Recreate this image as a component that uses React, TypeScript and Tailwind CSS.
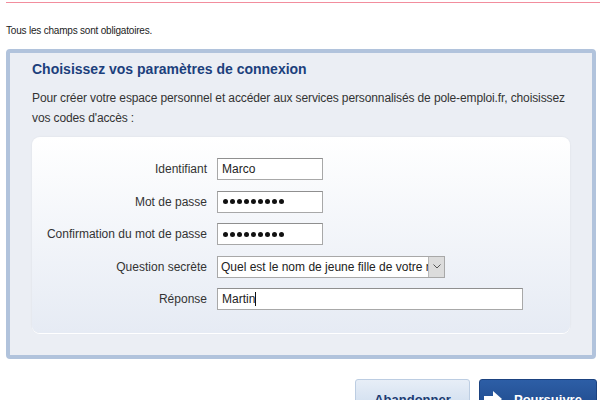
import React from "react";

const Dots = () => (
  <div className="flex items-center gap-[2px]">
    {Array.from({ length: 9 }).map((_, i) => (
      <span key={i} className="block w-[5px] h-[5px] rounded-full bg-[#111]" />
    ))}
  </div>
);

const Row = ({ label, children }: { label: string; children: React.ReactNode }) => (
  <div className="flex items-center h-[22px]">
    <div className="w-[185px] pr-[10px] text-right text-[12px] text-[#333] whitespace-nowrap">{label}</div>
    {children}
  </div>
);

export default function App() {
  return (
    <div className="w-[600px] h-[400px] overflow-hidden bg-white font-['Liberation_Sans',Arial,sans-serif] text-[#333]">
      <div className="ml-[6px] mt-[2px] h-px bg-[#f28d9d]" />
      <p className="ml-[6px] mt-[21px] text-[10px] leading-[14px] text-[#222] tracking-[-0.2px]">Tous les champs sont obligatoires.</p>
      <div className="ml-[6px] mt-[11px] w-[590px] h-[310px] rounded-[4px] border-4 border-[#b1c3dc] bg-[#ebeef4] pl-[22px] pr-[22px]">
        <h1 className="mt-[7px] text-[14px] leading-[18px] font-bold text-[#1c3f7c]">
          Choisissez vos paramètres de connexion
        </h1>
        <p className="mt-[10px] text-[12px] leading-[20px] text-[#333] whitespace-nowrap tracking-[-0.12px]">
          Pour créer votre espace personnel et accéder aux services personnalisés de pole-emploi.fr, choisissez
          <br />
          vos codes d'accès :
        </p>
        <div className="mt-[9px] w-[538px] h-[196px] rounded-[8px] bg-gradient-to-b from-white to-[#e6ebf4] shadow-[0_1px_0_#fff,0_0_2px_rgba(0,0,0,0.08)] pt-[21px] flex flex-col gap-[10.5px]">
          <Row label="Identifiant">
            <div className="w-[106px] h-[22px] border border-[#a8a8a8] border-t-[#8f8f8f] bg-white px-[4px] flex items-center text-[12px] text-[#222]">Marco</div>
          </Row>
          <Row label="Mot de passe">
            <div className="w-[106px] h-[22px] border border-[#a8a8a8] border-t-[#8f8f8f] bg-white px-[5px] flex items-center"><Dots /></div>
          </Row>
          <Row label="Confirmation du mot de passe">
            <div className="w-[106px] h-[22px] border border-[#a8a8a8] border-t-[#8f8f8f] bg-white px-[5px] flex items-center"><Dots /></div>
          </Row>
          <Row label="Question secrète">
            <div className="w-[228px] h-[22px] border border-[#a8a8a8] bg-white flex items-stretch text-[12px] text-[#222]">
              <div className="flex-1 overflow-hidden whitespace-nowrap pl-[3px] flex items-center">Quel est le nom de jeune fille de votre m</div>
              <div className="w-[16px] bg-[#dcdcdc] border-l border-[#b8b8b8] flex items-center justify-center">
                <svg width="8" height="5" viewBox="0 0 8 5"><path d="M0.5 0.5 L4 4 L7.5 0.5" fill="none" stroke="#555" strokeWidth="1" /></svg>
              </div>
            </div>
          </Row>
          <Row label="Réponse">
            <div className="w-[306px] h-[22px] border border-[#a8a8a8] border-t-[#8f8f8f] bg-white px-[4px] flex items-center text-[12px] text-[#222]">
              Martin<span className="inline-block w-px h-[14px] bg-[#111]" />
            </div>
          </Row>
        </div>
      </div>
      <div className="mt-[20px] flex justify-end gap-[9px] pr-[3px]">
        <div className="w-[115px] h-[40px] rounded-[3px] border border-[#bccde2] bg-gradient-to-b from-[#e7eef7] to-[#c8d8ec] flex items-start justify-center pt-[10px] text-[13px] font-bold text-[#1d3c72]">
          Abandonner
        </div>
        <div className="w-[118px] h-[40px] rounded-[3px] bg-gradient-to-b from-[#2d5ea6] to-[#1c4787] border border-[#1b4280] flex items-start pt-[10px] pl-[4px] gap-[12px] text-[13px] font-bold text-white">
          <svg width="18" height="16" viewBox="0 0 18 16" className="mt-[1px]"><path d="M0 5 H9 V0 L18 8 L9 16 V11 H0 Z" fill="#fff" /></svg>
          Poursuivre
        </div>
      </div>
    </div>
  );
}
